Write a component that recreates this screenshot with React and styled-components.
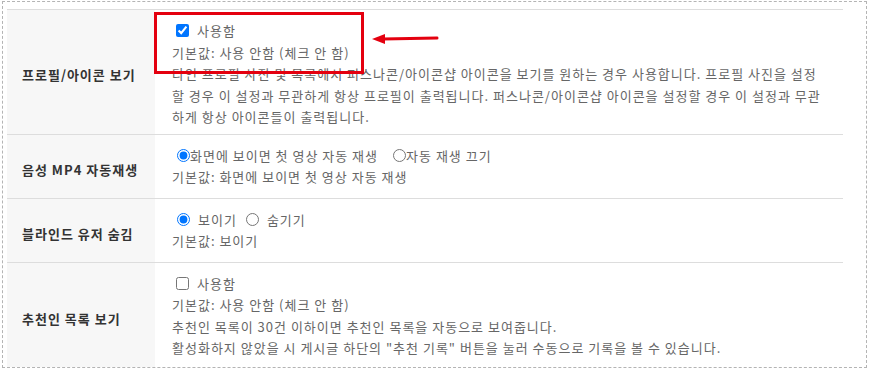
import styled, { createGlobalStyle } from 'styled-components'

const GlobalStyle = createGlobalStyle`
    html, body {
        margin: 0;
        padding: 0;
        background: #ffffff;
    }
    body {
        font-family: "Noto Sans CJK KR", "Noto Sans", sans-serif;
    }
`

const Frame = styled.div`
    position: relative;
    box-sizing: border-box;
    margin: 1px 0 0 2px;
    width: 865px;
    height: 367px;
    border: 1px dashed #b4b4b4;
    padding: 7px 23px 0 4px;
    display: flex;
    overflow: hidden;
`

const Table = styled.div`
    flex: 1;
    display: flex;
    flex-direction: column;
`

const Row = styled.div`
    display: grid;
    grid-template-columns: 148px 1fr;
    border-top: 1px solid #dddddd;
    flex: ${(p) => (p.$last ? 1 : 'none')};
`

const Label = styled.div`
    background: #f7f7f7;
    display: flex;
    align-items: center;
    padding: 6px 0 0 15px;
    font-size: 13px;
    font-weight: 700;
    letter-spacing: 1px;
    color: #333333;
`

const Cell = styled.div`
    padding: 10px 14px ${(p) => (p.$tight ? 6 : 10)}px 17px;
    font-size: 13px;
    line-height: 21.5px;
    letter-spacing: 1px;
    color: #666666;
    word-break: break-all;
`

const Options = styled.div`
    display: flex;
    align-items: center;
    height: 21.5px;
`

const Choice = styled.label`
    display: inline-flex;
    align-items: center;
    margin-right: ${(p) => p.$gap || 0}px;
    input {
        margin: 0 ${(p) => p.$space || 0}px 0 ${(p) => (p.$radio ? 5 : 4)}px;
        width: 13px;
        height: 13px;
    }
`

const Line = styled.div``

const Highlight = styled.div`
    position: absolute;
    left: 151px;
    top: 10px;
    width: 210px;
    height: 62px;
    border: 3px solid #e4000f;
    box-sizing: border-box;
    pointer-events: none;
`

const Arrow = styled.svg`
    position: absolute;
    left: 368px;
    top: 30px;
`

function CheckRow({ checked, lines }) {
    return (
        <>
            <Options>
                <Choice $space={8}>
                    <input type="checkbox" defaultChecked={checked} />
                    사용함
                </Choice>
            </Options>
            {lines.map((t, i) => (
                <Line key={i}>{t}</Line>
            ))}
        </>
    )
}

export default function App() {
    return (
        <>
            <GlobalStyle />
            <Frame>
                <Table>
                    <Row>
                        <Label>프로필/아이콘 보기</Label>
                        <Cell $tight>
                            <CheckRow
                                checked
                                lines={[
                                    '기본값: 사용 안함 (체크 안 함)',
                                    '다인 프로필 사진 및 목록에서 퍼스나콘/아이콘샵 아이콘을 보기를 원하는 경우 사용합니다. 프로필 사진을 설정할 경우 이 설정과 무관하게 항상 프로필이 출력됩니다. 퍼스나콘/아이콘샵 아이콘을 설정할 경우 이 설정과 무관하게 항상 아이콘들이 출력됩니다.',
                                ]}
                            />
                        </Cell>
                    </Row>
                    <Row>
                        <Label>음성 MP4 자동재생</Label>
                        <Cell>
                            <Options>
                                <Choice $radio $gap={10}>
                                    <input type="radio" name="mp4" defaultChecked />
                                    화면에 보이면 첫 영상 자동 재생
                                </Choice>
                                <Choice $radio>
                                    <input type="radio" name="mp4" />
                                    자동 재생 끄기
                                </Choice>
                            </Options>
                            <Line>기본값: 화면에 보이면 첫 영상 자동 재생</Line>
                        </Cell>
                    </Row>
                    <Row>
                        <Label>블라인드 유저 숨김</Label>
                        <Cell>
                            <Options>
                                <Choice $radio $space={8} $gap={4}>
                                    <input type="radio" name="blind" defaultChecked />
                                    보이기
                                </Choice>
                                <Choice $radio $space={8}>
                                    <input type="radio" name="blind" />
                                    숨기기
                                </Choice>
                            </Options>
                            <Line>기본값: 보이기</Line>
                        </Cell>
                    </Row>
                    <Row $last>
                        <Label>추천인 목록 보기</Label>
                        <Cell>
                            <CheckRow
                                lines={[
                                    '기본값: 사용 안함 (체크 안 함)',
                                    '추천인 목록이 30건 이하이면 추천인 목록을 자동으로 보여줍니다.',
                                    '활성화하지 않았을 시 게시글 하단의 "추천 기록" 버튼을 눌러 수동으로 기록을 볼 수 있습니다.',
                                ]}
                            />
                        </Cell>
                    </Row>
                </Table>
                <Highlight />
                <Arrow width="70" height="14" viewBox="0 0 70 14">
                    <line x1="12" y1="7" x2="66" y2="6" stroke="#e4000f" strokeWidth="3" strokeLinecap="round" />
                    <polygon points="1,7 14,2 14,12" fill="#e4000f" />
                </Arrow>
            </Frame>
        </>
    )
}
